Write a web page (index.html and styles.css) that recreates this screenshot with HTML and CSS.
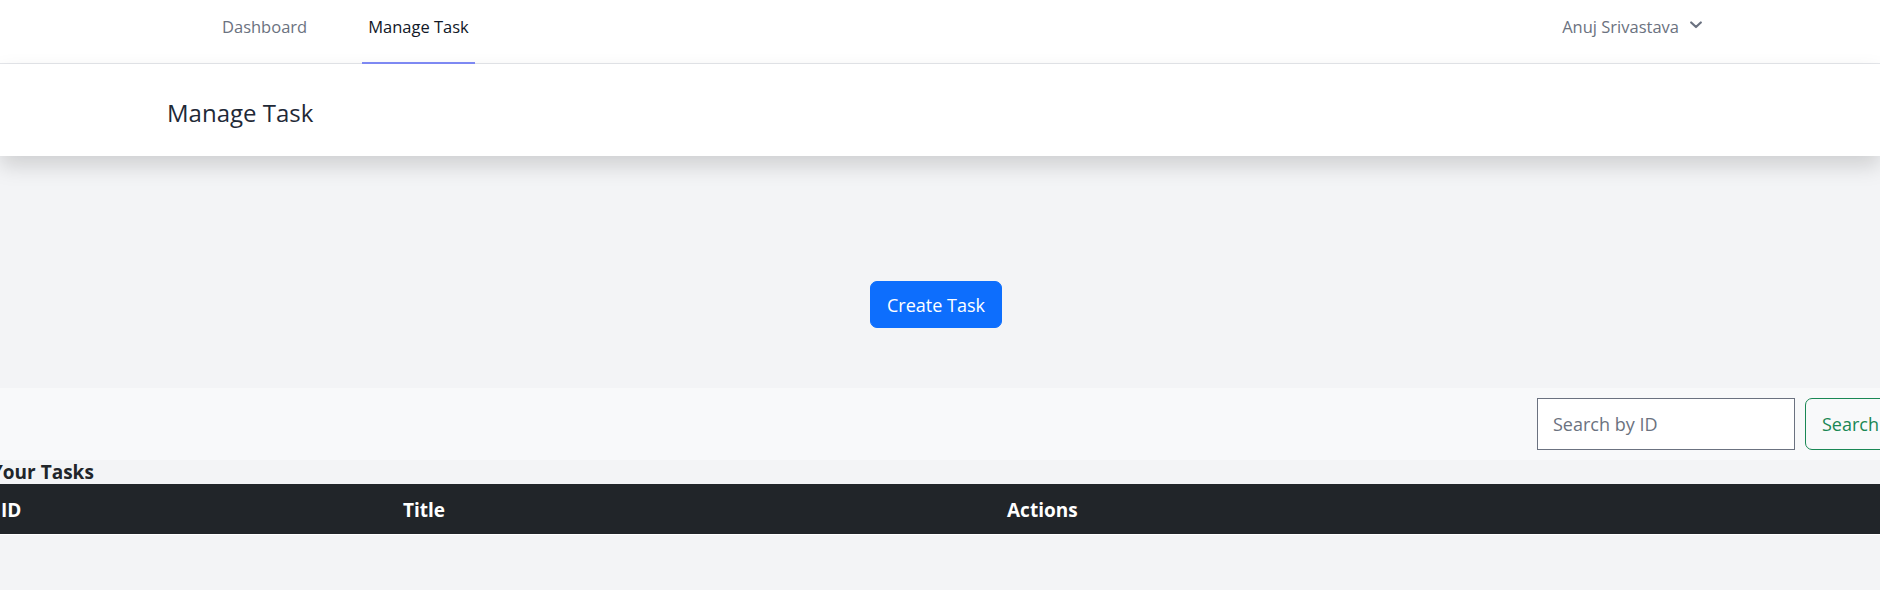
FILE: index.html
```html
<!DOCTYPE html>
<html lang="en">
<head>
<meta charset="utf-8">
<title>Manage Task</title>
<link rel="stylesheet" href="styles.css">
</head>
<body>
<nav class="topnav">
  <div class="nav-inner">
    <div class="nav-links">
      <a class="nav-link" href="#">Dashboard</a>
      <a class="nav-link active" href="#">Manage Task</a>
    </div>
    <div class="user">
      <span>Anuj Srivastava</span>
      <svg class="chev" width="12" height="8" viewBox="0 0 12 8"><polyline points="1.2,1.5 6,6 10.8,1.5" fill="none" stroke="#6b7280" stroke-width="2.2" stroke-linecap="round" stroke-linejoin="round"/></svg>
    </div>
  </div>
</nav>
<header class="page-header">
  <h2 class="page-title">Manage Task</h2>
</header>
<main class="content">
  <div class="create-wrap">
    <button class="btn-create" type="button">Create Task</button>
  </div>
  <div class="tasks">
    <div class="searchbar">
      <input class="search-input" type="text" placeholder="Search by ID">
      <button class="btn-search" type="button">Search</button>
    </div>
    <h4 class="tasks-title">Your Tasks</h4>
    <table class="task-table">
      <colgroup>
        <col class="c-id"><col class="c-title"><col>
      </colgroup>
      <thead>
        <tr><th>ID</th><th>Title</th><th>Actions</th></tr>
      </thead>
      <tbody></tbody>
    </table>
  </div>
</main>
</body>
</html>
```
FILE: styles.css
```css
* { box-sizing: border-box; }
html, body { margin: 0; padding: 0; }
body {
  background: #f3f4f6;
  font-family: "Open Sans", "Noto Sans", "DejaVu Sans", sans-serif;
  color: #212529;
  overflow-x: hidden;
  min-height: 590px;
}
.topnav {
  background: #ffffff;
  height: 64px;
  border-bottom: 1px solid #e5e7eb;
}
.nav-inner {
  display: flex;
  justify-content: space-between;
  height: 63px;
  padding-left: 216px;
  padding-right: 178px;
}
.nav-links {
  display: flex;
  gap: 49px;
}
.nav-link {
  display: block;
  height: 64px;
  padding: 15px 6px 0;
  border-bottom: 2px solid transparent;
  font-size: 16.5px;
  line-height: 24px;
  font-weight: 500;
  color: #6b7280;
  text-decoration: none;
}
.nav-link.active {
  border-bottom-color: #818cf8;
  color: #111827;
}
.user {
  display: flex;
  align-items: flex-start;
  gap: 11px;
  padding-top: 15px;
  font-size: 16.5px;
  line-height: 24px;
  font-weight: 500;
  color: #6b7280;
}
.chev { margin-top: 6px; }
.page-header {
  position: relative;
  background: #ffffff;
  box-shadow: 0 10px 20px rgba(0, 0, 0, 0.15);
  padding: 31px 0 25px 167px;
}
.page-title {
  margin: 0;
  font-size: 24px;
  line-height: 36px;
  font-weight: 400;
  color: #1f2937;
}
.create-wrap {
  display: flex;
  justify-content: center;
  padding: 125px 8px 60px 0;
}
.btn-create {
  background: #0d6efd;
  color: #ffffff;
  border: 1px solid #0d6efd;
  border-radius: 7px;
  font-family: inherit;
  font-size: 18px;
  line-height: 31px;
  padding: 8px 16px 6px;
}
.tasks {
  margin-left: -9px;
  margin-right: -31px;
}
.searchbar {
  display: flex;
  justify-content: flex-end;
  gap: 10px;
  padding: 10px 15px;
  background: #f8f9fa;
}
.search-input {
  width: 258px;
  height: 52px;
  border: 1px solid #6b7280;
  border-radius: 0;
  background: #ffffff;
  padding: 0 15px;
  font-family: inherit;
  font-size: 18px;
  color: #111827;
}
.search-input::placeholder { color: #6b7280; }
.btn-search {
  height: 52px;
  border: 1px solid #198754;
  border-radius: 7px;
  background: transparent;
  color: #198754;
  padding: 0 16px;
  font-family: inherit;
  font-size: 18px;
}
.tasks-title {
  margin: 0;
  padding-top: 1px;
  font-size: 19px;
  line-height: 23px;
  font-weight: 700;
  color: #212529;
}
.task-table {
  width: 100%;
  table-layout: fixed;
  border-collapse: collapse;
}
.c-id { width: 402px; }
.c-title { width: 604px; }
.task-table th {
  background: #212529;
  color: #ffffff;
  text-align: left;
  padding: 11px 10px 9px;
  font-size: 19px;
  line-height: 30px;
  font-weight: 700;
  border-bottom: 1px solid #ffffff;
}
```
